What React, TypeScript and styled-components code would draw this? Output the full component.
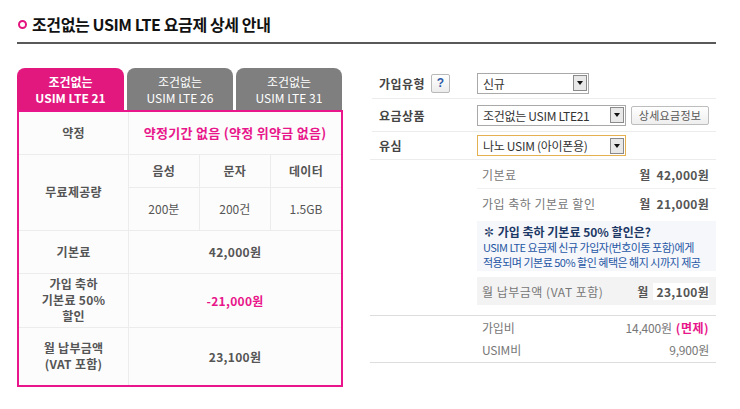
import styled, { createGlobalStyle } from 'styled-components'

//#region STYLE
const GlobalStyle = createGlobalStyle`
	html, body {
		margin: 0;
		padding: 0;
		background: #fff;
	}
	body {
		font-family: "Noto Sans CJK KR", "Noto Sans", "Liberation Sans", sans-serif;
		color: #555;
	}
`

const Page = styled.div`
	width: 699px;
	padding: 0 0 0 17px;
`

const TitleBar = styled.div`
	height: 44px;
	display: flex;
	align-items: center;
	gap: 5px;
	border-bottom: 2px solid #595959;
	padding-top: 5px;
	box-sizing: border-box;
	h1 {
		margin: 0;
		font-size: 16px;
		font-weight: bold;
		color: #111;
		letter-spacing: -0.4px;
	}
`

const Bullet = styled.span`
	width: 5px;
	height: 5px;
	border: 2px solid #e4147f;
	border-radius: 50%;
	margin-left: 1px;
	margin-top: 1px;
`

const Body = styled.div`
	display: flex;
	gap: 27px;
	margin-top: 24px;
`

const LeftCol = styled.div`
	width: 326px;
	flex: none;
`

const Tabs = styled.div`
	display: flex;
	gap: 3px;
`

const Tab = styled.div<{ $active?: boolean }>`
	width: ${p => (p.$active ? 107 : 106)}px;
	height: 42px;
	border-radius: 8px 8px 0 0;
	background: ${p => (p.$active ? '#e2187f' : '#7f7f7f')};
	color: #fff;
	font-size: 12px;
	line-height: 16px;
	font-weight: ${p => (p.$active ? 'bold' : 'normal')};
	display: flex;
	flex-direction: column;
	align-items: center;
	justify-content: center;
	padding-top: 1px;
	box-sizing: border-box;
`

const PlanTable = styled.table`
	width: 326px;
	border-collapse: collapse;
	border: 2px solid #e8168a;
	table-layout: fixed;
	td {
		border: 1px solid #ececec;
		text-align: center;
		font-size: 12px;
		padding: 0;
		background: #fcfcfc;
		color: #555;
	}
`

const LabelCell = styled.td`
	font-weight: bold;
	line-height: 16px;
	letter-spacing: 0.3px;
`

const ValueCell = styled.td<{ $pink?: boolean; $bold?: boolean }>`
	&& {
		color: ${p => (p.$pink ? '#e8168a' : '#555')};
	}
	font-weight: ${p => (p.$bold ? 'bold' : 'normal')};
	letter-spacing: ${p => (p.$bold ? '0.3px' : '0')};
`

const RightCol = styled.div`
	width: 346px;
	flex: none;
`

const FormRow = styled.div<{ $h: number }>`
	height: ${p => p.$h}px;
	display: flex;
	align-items: center;
	border-bottom: 1px solid #ececec;
	margin-left: 2px;
	font-size: 12px;
`

const FormLabel = styled.div`
	width: 98px;
	padding-left: 7px;
	display: flex;
	align-items: center;
	gap: 6px;
	color: #444;
	font-weight: bold;
	letter-spacing: 0.5px;
`

const HelpBtn = styled.span`
	width: 17px;
	height: 17px;
	border: 1px solid #b9b9b9;
	border-radius: 2px;
	background: linear-gradient(#ffffff, #ececec);
	color: #2e5aa7;
	font-weight: bold;
	font-family: "Liberation Sans", sans-serif;
	font-size: 12px;
	display: flex;
	align-items: center;
	justify-content: center;
`

const SelectBox = styled.div<{ $w: number; $focus?: boolean }>`
	width: ${p => p.$w}px;
	height: 21px;
	box-sizing: border-box;
	border: 1px solid ${p => (p.$focus ? '#e5b04f' : '#a9a9a9')};
	background: #fff;
	display: flex;
	align-items: center;
	justify-content: space-between;
	padding-left: 5px;
	padding-right: 1px;
	color: #333;
	font-size: 12px;
	letter-spacing: -0.3px;
`

const Arrow = styled.span`
	width: 14px;
	height: 16px;
	box-sizing: border-box;
	border: 1px solid #8a8a8a;
	background: #e8e8e8;
	display: flex;
	align-items: center;
	justify-content: center;
	&::after {
		content: '';
		border-left: 3px solid transparent;
		border-right: 3px solid transparent;
		border-top: 4px solid #111;
	}
`

const DetailBtn = styled.button`
	height: 19px;
	width: 78px;
	margin-left: 5px;
	border: 1px solid #bdbdbd;
	border-radius: 2px;
	background: linear-gradient(#ffffff, #eeeeee);
	color: #555;
	font-family: inherit;
	font-size: 11px;
	padding: 0;
	letter-spacing: 0.3px;
`

const Summary = styled.div`
	margin-left: 107px;
`

const SumRow = styled.div<{ $bg?: string; $line?: boolean }>`
	height: 28px;
	display: flex;
	align-items: center;
	justify-content: space-between;
	padding: 0 7px 0 5px;
	background: ${p => p.$bg || 'transparent'};
	border-bottom: ${p => (p.$line ? '1px solid #f0f0f0' : 'none')};
	font-size: 12px;
	color: #777;
	letter-spacing: 0.5px;
	b {
		color: #555;
		font-size: 12px;
		letter-spacing: 0.3px;
	}
`

const WhiteNum = styled.span`
	background: #fff;
	padding: 0 0 0 4px;
	margin-left: 4px;
`

const InfoBox = styled.div`
	margin: 4px 0 6px;
	height: 50px;
	box-sizing: border-box;
	background: #f6f7fa;
	padding: 2px 6px 0;
	font-size: 11px;
	line-height: 15px;
	color: #2556a5;
	letter-spacing: -0.5px;
	white-space: nowrap;
	strong {
		display: block;
		color: #1c3866;
		font-size: 12px;
		line-height: 17px;
		letter-spacing: 0;
	}
`

const FeeBlock = styled.div`
	margin-top: 10px;
	border-top: 1px solid #ddd;
	border-bottom: 1px solid #ddd;
	padding: 0 0 2px;
`

const FeeRow = styled.div`
	height: 22px;
	display: flex;
	align-items: center;
	justify-content: space-between;
	margin-left: 107px;
	padding: 0 7px 0 5px;
	font-size: 12px;
	color: #777;
	letter-spacing: -0.2px;
	em {
		font-style: normal;
		font-weight: bold;
		color: #e8168a;
		margin-left: 4px;
		letter-spacing: 0.5px;
	}
`
//#endregion

const tabs = [
	{ name: 'USIM LTE 21', active: true },
	{ name: 'USIM LTE 26' },
	{ name: 'USIM LTE 31' },
]

const App = () => {
	return (
		<Page>
			<GlobalStyle />
			<TitleBar>
				<Bullet />
				<h1>조건없는 USIM LTE 요금제 상세 안내</h1>
			</TitleBar>

			<Body>
				<LeftCol>
					<Tabs>
						{tabs.map(tab => (
							<Tab key={tab.name} $active={tab.active}>
								<span>조건없는</span>
								<span>{tab.name}</span>
							</Tab>
						))}
					</Tabs>
					<PlanTable>
						<colgroup>
							<col style={{ width: 110 }} />
							<col style={{ width: 70 }} />
							<col style={{ width: 71 }} />
							<col style={{ width: 71 }} />
						</colgroup>
						<tbody>
							<tr style={{ height: 43 }}>
								<LabelCell>약정</LabelCell>
								<ValueCell colSpan={3} $pink $bold style={{ fontSize: 13 }}>
									약정기간 없음 (약정 위약금 없음)
								</ValueCell>
							</tr>
							<tr style={{ height: 33 }}>
								<LabelCell rowSpan={2}>무료제공량</LabelCell>
								<ValueCell $bold>음성</ValueCell>
								<ValueCell $bold>문자</ValueCell>
								<ValueCell $bold>데이터</ValueCell>
							</tr>
							<tr style={{ height: 43 }}>
								<ValueCell>200분</ValueCell>
								<ValueCell>200건</ValueCell>
								<ValueCell>1.5GB</ValueCell>
							</tr>
							<tr style={{ height: 43 }}>
								<LabelCell>기본료</LabelCell>
								<ValueCell colSpan={3} $bold>42,000원</ValueCell>
							</tr>
							<tr style={{ height: 54 }}>
								<LabelCell>가입 축하<br />기본료 50%<br />할인</LabelCell>
								<ValueCell colSpan={3} $pink $bold>-21,000원</ValueCell>
							</tr>
							<tr style={{ height: 59 }}>
								<LabelCell>월 납부금액<br />(VAT 포함)</LabelCell>
								<ValueCell colSpan={3} $bold>23,100원</ValueCell>
							</tr>
						</tbody>
					</PlanTable>
				</LeftCol>

				<RightCol>
					<FormRow $h={30}>
						<FormLabel>가입유형 <HelpBtn>?</HelpBtn></FormLabel>
						<SelectBox $w={112}>신규<Arrow /></SelectBox>
					</FormRow>
					<FormRow $h={32}>
						<FormLabel>요금상품</FormLabel>
						<SelectBox $w={149}>조건없는 USIM LTE21<Arrow /></SelectBox>
						<DetailBtn>상세요금정보</DetailBtn>
					</FormRow>
					<FormRow $h={27} style={{ marginLeft: 0, paddingLeft: 2 }}>
						<FormLabel>유심</FormLabel>
						<SelectBox $w={149} $focus>나노 USIM (아이폰용)<Arrow /></SelectBox>
					</FormRow>

					<Summary>
						<SumRow $line>
							<span>기본료</span>
							<b>월&nbsp; 42,000원</b>
						</SumRow>
						<SumRow>
							<span>가입 축하 기본료 할인</span>
							<b>월&nbsp; 21,000원</b>
						</SumRow>
						<InfoBox>
							<strong>✽ 가입 축하 기본료 50% 할인은?</strong>
							USIM LTE 요금제 신규 가입자(번호이동 포함)에게<br />
							적용되며 기본료 50% 할인 혜택은 해지 시까지 제공
						</InfoBox>
						<SumRow $bg="#f3f3f3">
							<span>월 납부금액 (VAT 포함)</span>
							<b>월<WhiteNum>23,100원</WhiteNum></b>
						</SumRow>
					</Summary>

					<FeeBlock>
						<FeeRow>
							<span>가입비</span>
							<span>14,400원<em>(면제)</em></span>
						</FeeRow>
						<FeeRow>
							<span>USIM비</span>
							<span>9,900원</span>
						</FeeRow>
					</FeeBlock>
				</RightCol>
			</Body>
		</Page>
	)
}

export default App
